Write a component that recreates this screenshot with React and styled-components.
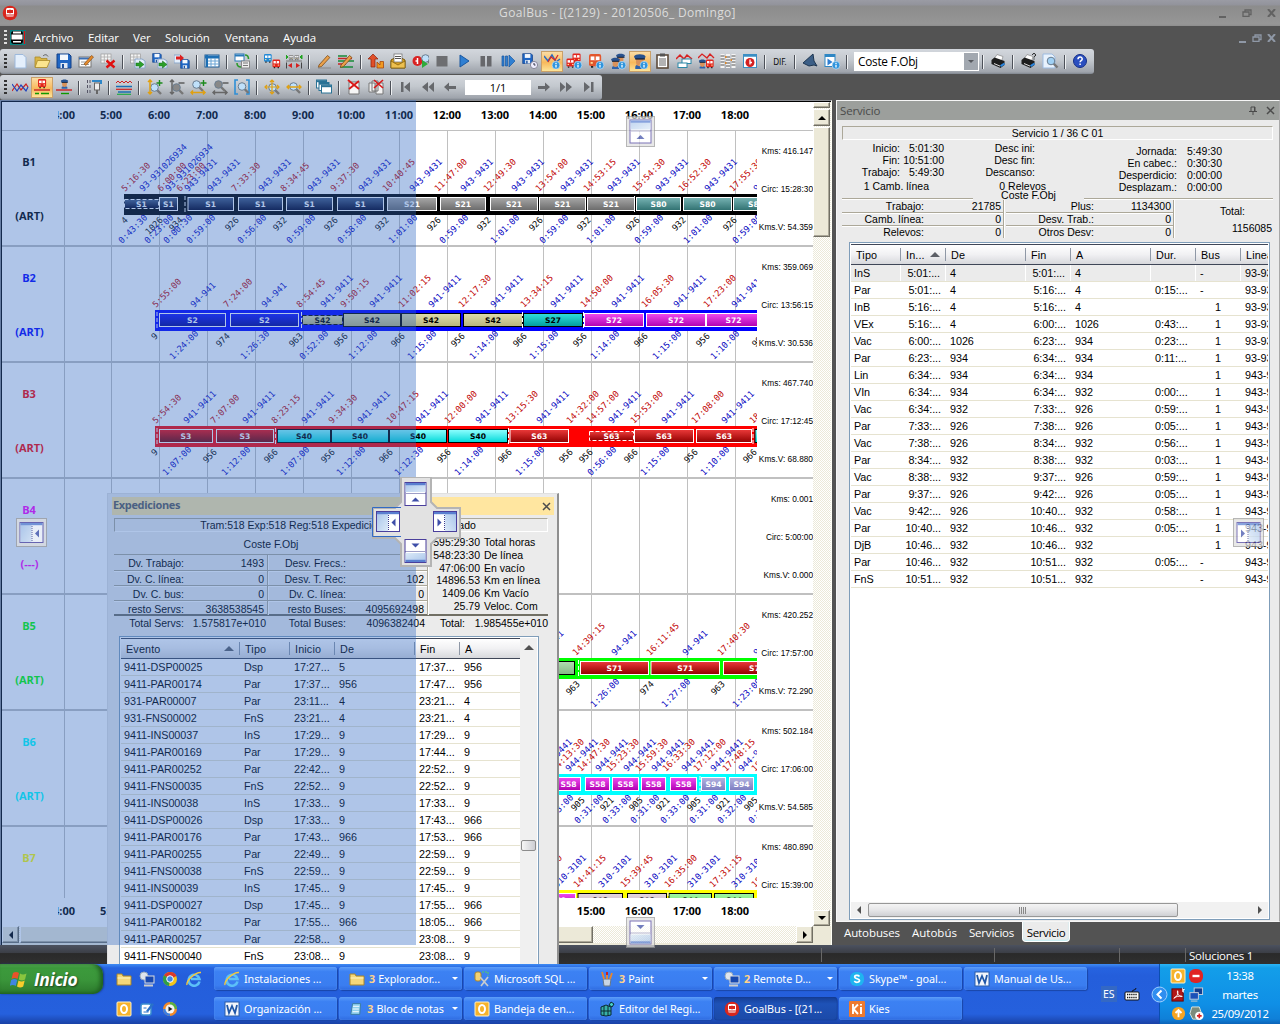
import React from 'react';
import styled, { createGlobalStyle, css } from 'styled-components';

const UI = '"Open Sans", "Noto Sans", sans-serif';
const GRID = '"Liberation Sans", Arial, sans-serif';
const TAHOMA = '"Noto Sans", "DejaVu Sans Condensed", sans-serif';

const Global = createGlobalStyle`
  * { box-sizing: border-box; }
  body { margin: 0; background: #535353; overflow: hidden; }
  #root { width: 1280px; }
`;

const Screen = styled.div`
  position: relative;
  display: flex;
  flex-direction: column;
  width: 1280px;
  height: 1024px;
  overflow: hidden;
  background: #535353;
  font-family: ${GRID};
  font-size: 11px;
  white-space: nowrap;
  cursor: default;
`;

/* ---------- title, menu ---------- */

const TitleBar = styled.header`
  display: flex;
  align-items: center;
  height: 26px;
  flex: none;
  padding: 0 4px 0 2px;
  background: linear-gradient(#9a9ba4 0, #92939b 5px, #8c8c8c 6px, #969696 24px, #8e8e8e 100%);
`;
const TitleText = styled.h1`
  flex: 1;
  margin: 0;
  padding-right: 2px;
  text-align: center;
  font: 400 12px/24px ${UI};
  letter-spacing: 0.35px;
  color: #dcdcdc;
`;
const WinButtons = styled.div`
  display: flex;
  align-items: center;
  gap: ${(p) => p.$gap}px;
  color: ${(p) => p.$color};
`;
const MenuBar = styled.nav`
  display: flex;
  align-items: center;
  height: 23px;
  flex: none;
  padding: 0 4px 0 4px;
`;
const MenuItem = styled.span`
  width: ${(p) => p.$w}px;
  font: 400 11.5px/20px ${UI};
  letter-spacing: -0.1px;
  color: #fff;
`;
const Spacer = styled.div`
  flex: 1;
`;
const Grip = styled.div`
  width: 3px;
  height: 15px;
  margin-right: ${(p) => p.$mr || 0}px;
  background: repeating-linear-gradient(${(p) => p.$c || '#333'} 0 2px, transparent 2px 4px);
`;

/* ---------- toolbars ---------- */

const ToolRow = styled.div`
  display: flex;
  height: 25px;
  flex: none;
  margin-bottom: ${(p) => p.$mb || 0}px;
`;
const ToolStrip = styled.div`
  display: flex;
  align-items: center;
  width: ${(p) => p.$w}px;
  padding-left: 4px;
  border-radius: 3px;
  background: linear-gradient(#d3d7dd, #c3c8ce 45%, #9fa4ac 92%, #7f858f);
`;
const ToolButton = styled.span`
  display: flex;
  align-items: center;
  justify-content: center;
  width: 22px;
  height: 21px;
  flex: none;
  ${(p) =>
    p.$active &&
    css`
      background: linear-gradient(#fbe0ac, #f8b95c 55%, #fde9a0);
      box-shadow: inset 0 0 0 1px #c9a069;
    `}
`;
const ToolSep = styled.span`
  width: 2px;
  height: 14px;
  margin: 0 3px;
  flex: none;
  background: linear-gradient(90deg, #4c5058 50%, #eef0f2 50%);
`;
const Dif = styled.span`
  width: 22px;
  text-align: center;
  font: 8.5px/20px "DejaVu Sans Condensed", sans-serif;
  color: #111;
`;
const Combo = styled.div`
  display: flex;
  width: 125px;
  height: 19px;
  margin: 0 0 0 3px;
  padding: 1px;
  background: #fff;
`;
const ComboText = styled.span`
  flex: 1;
  padding-left: 3px;
  font: 11.8px/17px ${UI};
  letter-spacing: -0.25px;
  color: #000;
`;
const ComboArrow = styled.span`
  display: flex;
  align-items: center;
  justify-content: center;
  width: 14px;
  background: #a2a8b0;
`;
const PageBox = styled.span`
  width: 66px;
  height: 15px;
  margin: 0 2px 0 4px;
  background: #fff;
  text-align: center;
  font: 11px/15px ${UI};
`;

const Mag = ({ x = 0, y = 0, c = '#bfe0fa' }) => (
  <g transform={`translate(${x} ${y})`}>
    <path d="M8 8l4 4" stroke="#777" strokeWidth="2.4" />
    <circle cx="5.5" cy="5.5" r="3.8" fill={c} stroke="#6a7d90" />
  </g>
);
const Info = () => (
  <g>
    <circle cx="12" cy="12.2" r="3.9" fill="#2f94dc" stroke="#d8ecfa" strokeWidth=".6" />
    <path d="M12 9.8v1.2M12 11.8v2.6" stroke="#fff" strokeWidth="1.3" />
  </g>
);
const Bus = ({ x = 0, y = 0, s = 1, c = '#e3251d' }) => (
  <g transform={`translate(${x} ${y}) scale(${s})`}>
    <rect x="0" y="0" width="9" height="9" rx="1.5" fill={c} />
    <rect x="1.2" y="1.8" width="6.6" height="2.8" fill="#fff" />
    <path d="M4.5 1.5v3" stroke={c} />
    <rect x="1.2" y="6" width="1.6" height="1.2" fill="#ffe9a0" />
    <rect x="6.2" y="6" width="1.6" height="1.2" fill="#ffe9a0" />
    <path d="M1.5 9.5h1.6M6 9.5h1.6" stroke="#222" strokeWidth="1.4" />
  </g>
);
const Cop = ({ x = 0, y = 0 }) => (
  <g transform={`translate(${x} ${y})`}>
    <path d="M2 10.500c0-2.500 7-2.500 7 0v1.500H2z" fill="#2d62ab" />
    <path d="M2.600 4h5.800v3a2.900 2.900 0 0 1-5.800 0z" fill="#d9925a" />
    <path d="M1 2.500C2 0 9 0 10 2.500L9 4.300H2z" fill="#28528f" />
    <path d="M2 4.300h7.500" stroke="#0c1a30" strokeWidth=".9" />
  </g>
);
const Disk = ({ s = 1, x = 0, y = 0 }) => (
  <g transform={`translate(${x} ${y}) scale(${s})`}>
    <path d="M1 1h12l2 2v12H1z" fill="#1f66c4" stroke="#123f86" />
    <rect x="4" y="1.5" width="8" height="5.5" fill="#f4f8fd" />
    <rect x="4.5" y="10" width="7" height="5" fill="#dfe8f3" />
    <rect x="6" y="11" width="2" height="4" fill="#1b4f9c" />
  </g>
);
const Sheet = ({ x = 0, y = 0 }) => (
  <g transform={`translate(${x} ${y})`}>
    <rect x="0" y="0" width="10" height="9" fill="#f5f5f5" stroke="#9a9a9a" strokeWidth=".7" />
    <path d="M0 3h10M0 6h10M3.3 0v9M6.6 0v9" stroke="#a9a9a9" strokeWidth=".8" />
  </g>
);
const Pencil = () => <path d="M3 12l8.5-9.5 2.4 2L5.4 13.6l-3 .8z" fill="#eaa04a" stroke="#7a4a17" strokeWidth=".8" />;
const GreenArrow = ({ x = 0, y = 0 }) => (
  <path transform={`translate(${x} ${y})`} d="M0 2h3.5V0L8 3.5 3.5 7V5H0z" fill="#2ba02b" stroke="#136913" strokeWidth=".5" />
);
const Printer = () => (
  <g>
    <path d="M4 6l3-4.5 6 2L11.5 8z" fill="#fff" stroke="#777" strokeWidth=".6" />
    <path d="M1.5 7l3-2.5 10 3.5v4l-4 3-9-4z" fill="#1d1d1d" />
    <path d="M4 10.5l6 2.6" stroke="#ddd" />
    <path d="M10.5 13.2l4-2.6" stroke="#2c86dd" strokeWidth="2" />
  </g>
);

const ICONS = {
  new: <path d="M3 1.5h8l3 3V15H3z" fill="#e4effc" stroke="#9db9dc" />,
  open: (
    <g stroke="#a98a2a" strokeWidth=".8">
      <path d="M1 4h5l1 1.5h6V14H1z" fill="#d9b545" />
      <path d="M3.5 7.5H16L13 14.5H1z" fill="#fbe58e" />
      <path d="M9 3c2-2 4-1.500 5 .5" fill="none" stroke="#444" />
    </g>
  ),
  save: <Disk />,
  edit: (
    <g>
      <rect x="1" y="4" width="12" height="10" fill="#fff" stroke="#777" />
      <path d="M1 5.500h12" stroke="#3c6fb4" strokeWidth="2" />
      <path d="M3 9h8M3 11.500h8" stroke="#999" />
      <path d="M6 11l7.500-8.500 2 1.500L8 12.500z" fill="#e58a2b" stroke="#8a5018" strokeWidth=".7" />
    </g>
  ),
  del: (
    <g>
      <Sheet x={1} y={1} />
      <path d="M6.500 7.500l8 7M14.500 7.500l-8 7" stroke="#e01010" strokeWidth="2.4" />
    </g>
  ),
  expo: (
    <g>
      <Sheet x={0.5} y={1} />
      <path d="M5 6h7l3 2v7H5z" fill="#e4effc" stroke="#8ba6c8" />
      <GreenArrow x={6} y={8} />
    </g>
  ),
  saveexp: (
    <g>
      <Disk s={0.62} />
      <path d="M6 6h6l3 2v7H6z" fill="#e4effc" stroke="#8ba6c8" />
      <GreenArrow x={7} y={8} />
    </g>
  ),
  imp: (
    <g>
      <path d="M0 2h6l2 2v6H0z" fill="#e4effc" stroke="#8ba6c8" />
      <Disk s={0.62} x={6} y={6} />
      <path d="M2 3.500h4V1.500l4 3.500-4 3.500v-2H2z" fill="#dd1f1f" />
    </g>
  ),
  table: (
    <g>
      <rect x="1" y="2" width="14" height="12" fill="#fff" stroke="#1c5b94" />
      <path d="M1 4h14" stroke="#1d6fb4" strokeWidth="3" />
      <path d="M3 2v12" stroke="#1d6fb4" strokeWidth="2" />
      <path d="M7 5v9M11 5v9M4 8h11M4 11h11" stroke="#6aa4d4" />
    </g>
  ),
  refresh: (
    <g>
      <rect x="1" y="1" width="9" height="7" fill="#fff" stroke="#2a79b8" />
      <path d="M1 2.500h9" stroke="#2a79b8" strokeWidth="2" />
      <path d="M11 2c3 0 3.500 2 3.500 4M3 10c0 3 1.500 4 4 4" stroke="#2d9a2d" strokeWidth="1.600" fill="none" />
      <rect x="7.500" y="8" width="8" height="7" fill="#eee" stroke="#888" />
      <path d="M9 10h5M9 12.500h5" stroke="#777" />
    </g>
  ),
  buses: (
    <g>
      <Bus s={0.85} y={1} c="#2289d6" />
      <Bus s={0.85} x={8.500} y={6.500} />
    </g>
  ),
  align: (
    <g>
      <path d="M0 2v4l2-2zM16 2v4l-2-2z" fill="#22a322" stroke="#22a322" />
      <Bus s={0.5} x={2.800} y={2} c="#888" />
      <Bus s={0.5} x={8.500} y={2} c="#888" />
      <path d="M0 8h16" stroke="#777" />
      <path d="M6 10v5l-4-2.500zM10 10v5l4-2.500z" fill="#d42020" />
      <path d="M.5 9.500v6M15.500 9.500v6" stroke="#444" />
    </g>
  ),
  pencil: (
    <g>
      <Pencil />
      <path d="M2 15h13" stroke="#888" />
    </g>
  ),
  pencil2: (
    <g>
      <path d="M0 3h9M0 8h16M2 14h13" stroke="#188a38" strokeWidth="1.300" />
      <path d="M0 5.500h14M0 11h8" stroke="#c72626" strokeWidth="1.300" />
      <Pencil />
    </g>
  ),
  redup: (
    <g>
      <path d="M5 1l5 5H7v8H3V6H0z" fill="#e0502a" stroke="#8c2008" strokeWidth=".7" />
      <path d="M9 15V9l3 3V8.500h3.500V15z" fill="#f09a20" stroke="#a8480c" strokeWidth=".8" />
    </g>
  ),
  mail: (
    <g>
      <path d="M1 7l7-4 7 4v8H1z" fill="#d9a124" stroke="#7d5a0a" />
      <rect x="4" y="1" width="8" height="8" fill="#fff" stroke="#666" strokeWidth=".7" />
      <path d="M5 3.500h6M5 5.500h6" stroke="#555" />
      <path d="M1 8l7 4 7-4v7H1z" fill="#edc050" stroke="#7d5a0a" strokeWidth=".7" />
    </g>
  ),
  stopgo: (
    <g>
      <circle cx="5.500" cy="8" r="5" fill="#d92222" />
      <path d="M5.500 5v6M3.500 8h2" stroke="#fff" strokeWidth="1.500" />
      <Mag x={8} y={0} />
      <path d="M10 7l6 4-6 4z" fill="#2faa3c" />
    </g>
  ),
  stop: <rect x="2.500" y="3" width="11" height="10.500" fill="#6d6e71" />,
  play: <path d="M4 2l9 6-9 6z" fill="#2f7fd2" stroke="#1957a0" />,
  pause: <path d="M2.500 3h4.500v10.500H2.500zM9 3h4.500v10.500H9z" fill="#66676b" />,
  step: (
    <g fill="#2f7fd2" stroke="#1957a0" strokeWidth=".7">
      <path d="M2 3h2v10H2zM5.500 3h2v10h-2zM9 2l6 6-6 6z" />
    </g>
  ),
  saveclk: (
    <g>
      <Disk s={0.7} />
      <circle cx="12" cy="12" r="3.600" fill="#eef" stroke="#889" />
      <path d="M12 10v2h1.500" stroke="#334" fill="none" />
    </g>
  ),
  lineinfo: (
    <g>
      <path d="M0 3l4 5 4-6 4 7 4-3" stroke="#2a6cc0" strokeWidth="1.500" fill="none" />
      <path d="M4 9l3-5 4 3 3-5" stroke="#d82828" strokeWidth="1.200" fill="none" />
      <Info />
    </g>
  ),
  businfo: (
    <g>
      <Bus x={6.500} y={0.5} s={0.9} />
      <Bus x={0.5} y={5.500} s={0.9} />
      <Info />
    </g>
  ),
  bus1: (
    <g>
      <Bus x={1} y={1} s={1.35} c="#e2562c" />
      <Info />
    </g>
  ),
  copinfo: (
    <g>
      <Cop x={5} y={0} />
      <Cop x={0} y={4} />
      <Info />
    </g>
  ),
  cop1: (
    <g>
      <g transform="scale(1.300)">
        <Cop x={0.5} y={0.3} />
      </g>
      <Info />
    </g>
  ),
  clip: (
    <g>
      <rect x="3" y="2" width="11" height="13" fill="#fff" stroke="#5c4a3a" strokeWidth="1.600" />
      <rect x="6" y="0.5" width="5" height="3" fill="#555" />
      <path d="M5 6h7M5 8h7M5 10h7M5 12h7" stroke="#666" />
    </g>
  ),
  wins: (
    <g>
      <path d="M0 6l4-4 4 4 3-4 5 4" stroke="#d82222" strokeWidth="1.500" fill="none" />
      <rect x="6" y="6" width="9" height="4.500" fill="#fff" stroke="#2b88a8" />
      <rect x="2" y="10" width="9" height="4.500" fill="#fff" stroke="#2b88a8" />
    </g>
  ),
  mixed: (
    <g>
      <path d="M0 5l4-4 5 4 3-4 4 4" stroke="#d82222" strokeWidth="1.300" fill="none" />
      <g transform="translate(0 6) scale(.8)">
        <Cop />
      </g>
      <Bus x={8} y={6.500} s={0.85} />
    </g>
  ),
  lists: (
    <g>
      <path d="M2.500 1v14M8 1v14M13.500 1v14" stroke="#f4f4f4" strokeWidth="4" />
      <path d="M.5 3h4M.5 6h4M.5 9h4M.5 12h4M6 4h4M6 7h4M6 10h4M6 13h4M11.500 3h4M11.500 6h4M11.500 9h4M11.500 12h4" stroke="#555" strokeWidth="1.200" />
      <path d="M5 4h1.500M10.500 7h1.500M5 10h1.500" stroke="#e08a2c" strokeWidth="2" />
    </g>
  ),
  stopw: (
    <g>
      <rect x="1.500" y="1.500" width="13" height="13" fill="#fff" stroke="#3b8fc4" />
      <path d="M1.500 2.500h13" stroke="#3b8fc4" strokeWidth="2.500" />
      <circle cx="8" cy="9.500" r="4.500" fill="#d42020" />
      <path d="M8 6.500v5M8 9.500h2" stroke="#fff" strokeWidth="1.300" />
    </g>
  ),
  horn: <path d="M1 10L11 1l1 7 3 5-3-1-5 1z" fill="#3c5f87" stroke="#1d3550" />,
  playinfo: (
    <g>
      <rect x="1" y="1.500" width="10" height="12" fill="#fff" stroke="#2f87c4" />
      <path d="M1 3h10" stroke="#2f87c4" strokeWidth="2" />
      <path d="M3.500 5.500l5 3.500-5 3.500z" fill="#2f7fd2" />
      <Info />
    </g>
  ),
  print: <Printer />,
  printq: (
    <g>
      <Printer />
      <path d="M12.500 2c0-2 3-2 3 0 0 1.500-1.500 1-1.500 2.500M14 5.500v1" stroke="#000" fill="none" />
    </g>
  ),
  preview: (
    <g>
      <path d="M1 1h9l3 3v11H1z" fill="#e8f2fd" stroke="#9dbbe0" />
      <Mag x={3.500} y={2.500} c="#9fd0f4" />
    </g>
  ),
  help: (
    <g>
      <circle cx="8" cy="8" r="6.500" fill="#2b4fc0" stroke="#152f86" />
      <path d="M6 6.300c0-3 4.200-3 4.200-.3 0 1.700-2.100 1.500-2.100 3.200M8.100 10.500v1.600" stroke="#fff" strokeWidth="1.500" fill="none" />
    </g>
  ),
  waves: (
    <g fill="none" strokeWidth="1.200">
      <path d="M0 12l5-7 4 6 5-6 2 3" stroke="#c22" />
      <path d="M0 5l5 7 4-6 5 6 2-4" stroke="#24b" />
    </g>
  ),
  busline: (
    <g>
      <Bus x={4} y={0} s={0.9} />
      <path d="M0 11h16" stroke="#c22" strokeWidth="1.400" />
      <path d="M1 14.500h4M7 14.500h8" stroke="#190" strokeWidth="1.400" />
    </g>
  ),
  copline: (
    <g>
      <g transform="translate(4 0) scale(.82)">
        <Cop />
      </g>
      <path d="M0 11h16" stroke="#c22" strokeWidth="1.400" />
      <path d="M5 14.500h8" stroke="#190" strokeWidth="1.400" />
    </g>
  ),
  door: (
    <g>
      <path d="M1.500 1v14M4 1v14" stroke="#556" strokeDasharray="3 2" />
      <path d="M6 2h9v3" stroke="#2d86c8" strokeWidth="2" fill="none" />
      <rect x="8.500" y="4" width="5" height="7" fill="#eee" stroke="#666" />
      <path d="M11 11v4" stroke="#666" strokeWidth="2" />
    </g>
  ),
  wavelines: (
    <g fill="none">
      <path d="M0 4l2-2 2 2 2-2 2 2 2-2 2 2 2-2 2 2" stroke="#c22" />
      <path d="M0 7.500h16M2 13h13" stroke="#1a6fb4" strokeWidth="1.600" />
      <path d="M0 10.300h16" stroke="#c22" strokeWidth="1.200" />
      <path d="M1 15.300h14" stroke="#2a4" strokeWidth="1.200" />
    </g>
  ),
  zin: (
    <g>
      <Mag x={3} y={3} />
      <path d="M4 1v14M2 3l2-2 2 2M2 13l2 2 2-2" stroke="#e0a010" strokeWidth="1.500" fill="none" />
      <path d="M13.500 1v6M10.500 4h6" stroke="#1c8a1c" strokeWidth="1.400" />
    </g>
  ),
  zout: (
    <g>
      <Mag x={3} y={3} c="#888" />
      <path d="M4 1v14M2 3l2-2 2 2M2 13l2 2 2-2" stroke="#666" strokeWidth="1.500" fill="none" />
      <path d="M10.500 4h6" stroke="#555" strokeWidth="1.400" />
    </g>
  ),
  hin: (
    <g>
      <Mag x={1} y={0} />
      <path d="M1 13.500h14M3 11.500l-2 2 2 2M13 11.500l2 2-2 2" stroke="#e0a010" strokeWidth="1.500" fill="none" />
      <path d="M13.500 1v6M10.500 4h6" stroke="#1c8a1c" strokeWidth="1.400" />
    </g>
  ),
  hout: (
    <g>
      <Mag x={1} y={0} c="#888" />
      <path d="M1 13.500h14M3 11.500l-2 2 2 2M13 11.500l2 2-2 2" stroke="#666" strokeWidth="1.500" fill="none" />
      <path d="M10.500 4h6" stroke="#555" strokeWidth="1.400" />
    </g>
  ),
  zbox: (
    <g>
      <path d="M4 1H1v14h3M12 1h3v14h-3" stroke="#2f8fd6" strokeWidth="1.600" fill="none" />
      <Mag x={2.500} y={2} />
    </g>
  ),
  cross: (
    <g>
      <Mag x={3} y={3} />
      <path d="M8 1v14M1 8h14M6 3l2-2 2 2M6 13l2 2 2-2M3 6L1 8l2 2M13 6l2 2-2 2" stroke="#e0a010" strokeWidth="1.200" fill="none" />
    </g>
  ),
  hfit: (
    <g>
      <Mag x={2} y={2} />
      <path d="M1 8h14M3 6L1 8l2 2M13 6l2 2-2 2" stroke="#e0a010" strokeWidth="1.300" fill="none" />
    </g>
  ),
  cascade: (
    <g fill="#fff" stroke="#2a7396">
      {[0, 2.5, 5].map((d) => (
        <g key={d}>
          <rect x={0.5 + d} y={1 + d} width="10" height="8" />
          <path d={`M${0.5 + d} ${2.2 + d}h10`} strokeWidth="2" />
        </g>
      ))}
    </g>
  ),
  delsheet: (
    <g>
      <path d="M3 3h10v12H3z" fill="#f6f6f6" stroke="#777" />
      <path d="M2 1l11 9M13 2L3 10" stroke="#d81818" strokeWidth="1.900" />
    </g>
  ),
  delsheets: (
    <g>
      <path d="M1 4h6v9H1zM4 2h6v10H4zM8 4h7v11H8z" fill="#f2f2f2" stroke="#777" />
      <path d="M6 1l9 8M15 1L6 9" stroke="#d81818" strokeWidth="1.600" />
    </g>
  ),
  first: <path d="M3 3h2.500v10H3zM12 3v10L6 8z" fill="#66686c" />,
  prev2: <path d="M8 3v10L2 8zM14 3v10L8.500 8z" fill="#66686c" />,
  prev: <path d="M2 8l5-4.500V7h7v3H7v2.500z" fill="#66686c" />,
  next: <path d="M14 8L9 3.500V7H2v3h7v2.500z" fill="#66686c" />,
  next2: <path d="M2 3v10l5.500-5zM8 3v10l6-5z" fill="#66686c" />,
  last: <path d="M4 3v10l6-5zM11 3h2.500v10H11z" fill="#66686c" />,
};

const Tool = ({ n, active }) => (
  <ToolButton $active={active}>
    <svg width="17" height="17" viewBox="0 0 17 17" fill="none">
      {ICONS[n]}
    </svg>
  </ToolButton>
);
const tools = (list) =>
  list.split(' ').map((n, i) => (n === '|' ? <ToolSep key={i} /> : <Tool key={i} n={n.replace('*', '')} active={n.includes('*')} />));

/* ---------- planning chart ---------- */

const Workspace = styled.main`
  display: flex;
  height: 845px;
  flex: none;
  gap: 4px;
`;
const ChartFrame = styled.section`
  display: grid;
  grid-template-columns: 811px 18px;
  grid-template-rows: 824px 17px;
  width: 832px;
  height: 845px;
  border: 1px solid #8b8d92;
  border-bottom: 0;
  border-right-color: #fffff5;
  box-shadow: inset 1px 1px 0 #000;
  padding: 1px 0 0 1px;
  background: #ece9d8;
`;
const Canvas = styled.svg`
  display: block;
  background: #fff;
`;
const checker = css`
  background: repeating-conic-gradient(#ece9d8 0 25%, #fff 0 50%) 0 0 / 2px 2px;
`;
const VTrack = styled.div`
  display: flex;
  flex-direction: column;
  ${checker}
`;
const HTrack = styled.div`
  display: flex;
  ${checker}
`;
const Classic = styled.div`
  display: flex;
  align-items: center;
  justify-content: center;
  width: ${(p) => p.$w}px;
  height: ${(p) => p.$h}px;
  flex: none;
  margin-top: ${(p) => p.$mt || 0}px;
  margin-left: ${(p) => p.$ml || 0}px;
  background: #ece9d8;
  border: 1px solid;
  border-color: #fff #716f64 #716f64 #fff;
  box-shadow: inset -1px -1px 0 #aca899;
`;
const Arrow = styled.i`
  border: ${(p) => p.$s || 4}px solid transparent;
  ${(p) => p.$d === 'up' && `border-bottom-color:${p.$c || '#000'}; border-top:0;`}
  ${(p) => p.$d === 'down' && `border-top-color:${p.$c || '#000'}; border-bottom:0;`}
  ${(p) => p.$d === 'left' && `border-right-color:${p.$c || '#000'}; border-left:0;`}
  ${(p) => p.$d === 'right' && `border-left-color:${p.$c || '#000'}; border-right:0;`}
`;

const PAL = {
  navy: ['#4a5f84', '#000020', '#fff', '#fff'],
  grey: ['#a8a8a8', '#6a6a6a', '#fff', '#fff'],
  teal: ['#78b4b4', '#2f7070', '#fff', '#fff'],
  blue: ['#1212ff', '#000090', '#fff', '#fff'],
  khaki: ['#dedcae', '#b6b37c', '#000', '#000'],
  turq: ['#30e0e0', '#009c9c', '#000', '#000'],
  magenta: ['#f04cf0', '#b000b0', '#fff', '#fff'],
  red: ['#ec3a3a', '#900000', '#fff', '#fff'],
  maroon: ['#f80808', '#700000', '#fff', '#fff'],
  cyan: ['#90ffff', '#00d8d8', '#000', '#000'],
  sage: ['#b0dcb0', '#84b884', '#000', '#000'],
  lav: ['#b4b4e0', '#7c7cc0', '#fff', '#fff'],
  rose: ['#e6d6de', '#c8b8c0', '#000', '#000'],
  lime: ['#a0f8a0', '#70e070', '#000', '#000'],
};

const ROWS = [
  {
    id: 'B1', kind: '(ART)', color: '#000', lab: '#000', from: 124,
    kms: '416.147', circ: '15:28:30', kv: '54.359',
    times: '5:16:30@120 6:00:00@156 6:23:00@175 7:33:30@230 8:34:45@279 9:37:30@329 10:40:45@381 11:47:00@433 12:49:30@482 13:54:00@534 14:53:15@582 15:54:30@631 16:52:30@677 17:55:30@728',
    routes: '93-931026934@138 93-931026934@164 943-9431@183 943-9431@206 943-9431@257 943-9431@306 943-9431@357 943-9431@408 943-9431@459 943-9431@510 943-9431@559 943-9431@606 943-9431@654 943-9431@703 943-9431@752',
    nodes: '4@128 1026@163 934@183 926@239 932@287 926@338 932@389 926@441 932@491 926@543 932@591 926@640 932@686 926@737',
    durs: '0:43:30@117 0:23:00@143 0:00:30@162 0:59:00@185 0:56:00@236 0:59:00@285 0:58:00@336 1:01:00@387 0:59:00@438 1:01:00@489 0:59:00@538 1:01:00@585 0:59:00@633 1:01:00@682 0:59:00@731',
    ticks: [185, 634.5],
    blocks: [[124, 159, 'S1', 'navy', 1], [159, 178, 'S1', 'navy'], [187.5, 234, 'S1', 'navy'], [238, 283, 'S1', 'navy'], [286, 333, 'S1', 'navy'], [337, 384, 'S1', 'navy'], [387, 437, 'S21', 'grey'], [440, 486, 'S21', 'grey'], [490, 538, 'S21', 'grey'], [539, 586, 'S21', 'grey'], [587, 635, 'S21', 'grey'], [636, 681, 'S80', 'teal'], [683, 732, 'S80', 'teal'], [733, 779, 'S80', 'teal']],
  },
  {
    id: 'B2', kind: '(ART)', color: '#0000ff', lab: '#0000ff', from: 155,
    kms: '359.069', circ: '13:56:15', kv: '30.536',
    times: '5:55:00@151 7:24:00@222 8:54:45@295 9:50:15@339 11:02:15@397 12:17:30@457 13:34:15@519 14:50:00@579 16:05:30@640 17:23:00@702',
    routes: '94-941@189 94-941@260 941-9411@319 941-9411@368 941-9411@427 941-9411@489 941-9411@549 941-9411@610 941-9411@672 941-9411@730',
    nodes: '9@158 974@230 963@303 956@348 966@405 956@465 966@527 956@587 966@648 956@710 966@766',
    durs: '1:24:00@168 1:26:30@239 0:52:00@298 1:12:00@347 1:15:00@406 1:14:00@468 1:15:00@528 1:14:00@589 1:15:00@651 1:10:00@709',
    ticks: [157, 301.5, 522.5, 583.5],
    blocks: [[159, 226, 'S2', 'blue'], [230, 299, 'S2', 'blue'], [302, 343, 'S42', 'khaki', 1], [343, 401, 'S42', 'khaki'], [401, 461, 'S42', 'khaki'], [463, 523, 'S42', 'khaki'], [523, 583, 'S27', 'turq'], [584, 644, 'S72', 'magenta'], [646, 706, 'S72', 'magenta'], [706, 761, 'S72', 'magenta']],
  },
  {
    id: 'B3', kind: '(ART)', color: '#ff0000', lab: '#ff0000', from: 155,
    kms: '467.740', circ: '17:12:45', kv: '68.880',
    times: '5:54:30@151 7:07:00@209 8:23:15@270 9:34:30@327 10:47:15@385 12:00:00@443 13:15:30@504 14:32:00@565 14:57:00@585 15:53:00@629 17:08:00@690 18:19:00@748',
    routes: '941-9411@182 941-9411@241 941-9411@300 941-9411@356 941-9411@414 941-9411@474 941-9411@535 941-9411@607 941-9411@660 941-9411@720',
    nodes: '9@158 956@217 966@278 956@335 966@393 956@451 966@512 956@573 956@593 966@638 956@698 966@757',
    durs: '1:07:00@161 1:12:00@220 1:07:00@279 1:12:00@335 1:12:30@393 1:14:00@453 1:15:00@514 0:56:00@586 1:15:00@639 1:10:00@699',
    ticks: [157, 275.5, 508.5, 753],
    blocks: [[159, 213, 'S3', 'maroon'], [216, 274, 'S3', 'maroon'], [277, 331, 'S40', 'cyan'], [331, 389, 'S40', 'cyan'], [389, 447, 'S40', 'cyan'], [448, 508, 'S40', 'cyan'], [509.5, 569, 'S63', 'red'], [589, 634, 'S63', 'red', 1], [634, 694, 'S63', 'red'], [696, 752, 'S63', 'red'], [754.5, 800, '', 'cyan']],
  },
  { id: 'B4', kind: '(---)', lab: '#ff00ff', kms: '0.001', circ: '5:00:00', kv: '0.000' },
  {
    id: 'B5', kind: '(ART)', color: '#00ff00', lab: '#00ff00', from: 440,
    kms: '420.252', circ: '17:57:00', kv: '72.290',
    times: '14:39:15@571 16:11:45@645 17:40:30@716',
    routes: '94-941@537 94-941@610 94-941@681 94-941@752',
    nodes: '963@580 974@654 963@725',
    durs: '1:26:00@589 1:27:00@660 1:23:00@731',
    ticks: [578.5],
    blocks: [[510, 575, '', 'sage'], [580, 649, 'S71', 'red'], [650.5, 720, 'S71', 'red'], [723, 791, 'S71', 'red']],
  },
  {
    id: 'B6', kind: '(ART)', color: '#00ffff', lab: '#00ffff', from: 440,
    kms: '502.184', circ: '17:06:00', kv: '54.585',
    times: '14:13:30@550 14:47:30@576 15:23:30@605 15:59:30@634 16:33:30@661 17:12:00@692 17:48:15@721 18:20:00@750',
    routes: '944-9441@538 944-9441@564 944-9441@594 944-9441@622 944-9441@650 944-9441@680 944-9441@709 944-9441@737',
    nodes: '905@585 921@614 905@643 921@670 905@701 921@730 905@758',
    durs: '0:33:00@543 0:31:00@573 0:33:00@601 0:31:00@629 0:33:00@659 0:31:00@688 0:32:00@716 0:31:00@747',
    ticks: [700],
    blocks: [[556, 581, 'S58', 'magenta'], [585, 610, 'S58', 'magenta'], [612, 639, 'S58', 'magenta'], [641, 666, 'S58', 'magenta'], [670, 697, 'S58', 'magenta'], [701, 726, 'S94', 'lav'], [729, 754, 'S94', 'lav']],
  },
  {
    id: 'B7', kind: '', color: '#ffff00', lab: '#ffff00', from: 440,
    kms: '480.890', circ: '15:39:00', kv: '',
    times: '13:45:00@528 14:41:15@572 15:39:45@619 16:35:00@663 17:31:15@708 18:25:00@750',
    routes: '310-3101@552 310-3101@597 310-3101@643 310-3101@686 310-3101@730',
    nodes: '', durs: '', ticks: [668],
    blocks: [[540, 576, 'S78', 'magenta'], [577.5, 623, 'S93', 'rose'], [627, 667, 'S93', 'rose'], [668.5, 712, 'S44', 'lime'], [714, 754, 'S44', 'lime']],
  },
];

const Slant = styled.text`
  font: 8.7px "DejaVu Sans Mono", monospace;
  fill: ${(p) => p.$c};
`;
const Axis = styled.text`
  font: 700 11px "Open Sans", "Noto Sans", sans-serif;
  text-anchor: middle;
  fill: ${(p) => p.$c || '#000'};
`;
const Stat = styled.text`
  font: 8.3px ${GRID};
  text-anchor: end;
`;
const BlockText = styled.text`
  font: 700 7.6px "DejaVu Sans", sans-serif;
  text-anchor: middle;
`;

const slants = (list, color, y, dx, end) =>
  (list || '')
    .split(' ')
    .filter(Boolean)
    .map((e) => {
      const [t, x] = e.split('@');
      const px = Number(x) + dx;
      return (
        <Slant key={e} $c={color} transform={`translate(${px} ${y}) rotate(-45)`} textAnchor={end ? 'end' : 'start'}>
          {t}
        </Slant>
      );
    });

const HOURS = Array.from({ length: 15 }, (_, i) => [`${i + 4}:00`, i === 0 ? 64.5 : 63.5 + i * 48]);

const Chart = () => (
  <Canvas width="811" height="824" viewBox="2 102 811 824">
    <defs>
      {Object.entries(PAL).map(([k, [a, b]]) => (
        <linearGradient key={k} id={k} x1="0" y1="0" x2="0" y2="1">
          <stop offset="0" stopColor={a} />
          <stop offset="1" stopColor={b} />
        </linearGradient>
      ))}
      <clipPath id="plot">
        <rect x="58" y="102" width="699" height="796" />
      </clipPath>
      <clipPath id="axis">
        <rect x="58" y="102" width="755" height="824" />
      </clipPath>
    </defs>
    {HOURS.map(([t, x]) => (
      <path key={t} d={`M${x} 131V898`} stroke="#c0c0c0" />
    ))}
    <path d="M2 130.500H813" stroke="#c0c0c0" />
    {[246, 362, 478, 594, 710, 826].map((y) => (
      <path key={y} d={`M2 ${y}H813`} stroke="#c0c0c0" strokeWidth="2" />
    ))}
    <g clipPath="url(#axis)">
      {HOURS.map(([t, x]) => (
        <React.Fragment key={t}>
          <Axis x={x - 0.5} y="119">{t}</Axis>
          <Axis x={x - 0.5} y="915">{t}</Axis>
        </React.Fragment>
      ))}
    </g>
    {ROWS.map((r, i) => {
      const y = 116 * i;
      return (
        <g key={r.id}>
          <Axis x="29" y={166 + y} $c={r.lab}>{r.id}</Axis>
          <Axis x="29.500" y={220 + y} $c={r.lab}>{r.kind}</Axis>
          <Stat x="813" y={154 + y}>Kms: {r.kms}</Stat>
          <Stat x="813" y={192 + y}>Circ: {r.circ}</Stat>
          {r.kv && <Stat x="813" y={230 + y}>Kms.V: {r.kv}</Stat>}
          {r.blocks && (
            <g clipPath="url(#plot)">
              {slants(r.times, '#c00000', 192 + y, 5)}
              {slants(r.routes, '#0000c0', 192 + y, 5)}
              {slants(r.nodes, '#000', 220.5 + y, 0.5, true)}
              {slants(r.durs, '#0000c0', 244 + y, 5)}
              <rect x={r.from} y={194 + y} width={757 - r.from} height="21" fill={r.color} />
              {r.blocks.map(([a, b, t, p, dashed]) => (
                <g key={a}>
                  <rect
                    x={a + 0.5} y={(dashed ? 199.5 : 197.5) + y} width={b - a - 1} height={dashed ? 9 : 13}
                    fill={`url(#${p})`} stroke={PAL[p][3]} strokeDasharray={dashed ? '4 2' : undefined}
                  />
                  <BlockText x={(a + b) / 2} y={206.6 + y} fill={PAL[p][2]}>{t}</BlockText>
                </g>
              ))}
              {r.ticks.map((x) => (
                <path key={x} d={`M${x} ${196 + y}v17`} stroke="#fff" strokeDasharray="4 2" />
              ))}
            </g>
          )}
        </g>
      );
    })}
  </Canvas>
);

/* ---------- side panel ---------- */

const Side = styled.aside`
  display: flex;
  flex-direction: column;
  width: 444px;
`;
const SideBody = styled.div`
  display: flex;
  flex-direction: column;
  height: 822px;
  padding: 0 6px 1px 5px;
  background: #ebebeb;
  border: 1px solid #f6f6f6;
  border-right-color: #a8a8a8;
`;
const SideTitle = styled.div`
  display: flex;
  align-items: center;
  justify-content: space-between;
  height: 19px;
  margin: 0 -6px 6px -5px;
  padding: 0 4px 0 3px;
  background: #9c9f9c;
  font: 11.5px/18px ${UI};
  letter-spacing: -0.15px;
  color: #4a4a4a;
`;
const Sunken = styled.div`
  height: 14px;
  flex: none;
  border: 1px solid;
  border-color: #aca899 #fff #fff #aca899;
  text-align: center;
  line-height: 13px;
  font-size: 10.5px;
  padding-left: ${(p) => p.$pl || 0}px;
`;
const InfoCols = styled.div`
  display: grid;
  grid-template-columns: 102px 102px 142px 1fr;
  height: 54px;
  flex: none;
  padding-top: 2px;
  font-size: 10.5px;
  line-height: 12px;
`;
const Pairs = styled.dl`
  display: grid;
  grid-template-columns: ${(p) => p.$c};
  grid-auto-rows: 12px;
  align-content: start;
  justify-items: end;
  margin: ${(p) => p.$mt || 0}px 0 0;
`;
const Cell = styled.div`
  text-align: right;
  margin-top: ${(p) => p.$mt || 0}px;
  padding-right: ${(p) => p.$pr || 0}px;
  grid-column: ${(p) => p.$span || 'auto'};
`;
const Legend = styled.div`
  display: flex;
  align-items: center;
  height: 10px;
  margin-top: -4px;
  flex: none;
  font-size: 10.5px;
  line-height: 10px;
`;
const Rule = styled.span`
  width: ${(p) => p.$w}px;
  height: 2px;
  margin-top: 7px;
  border-top: 1px solid #aca899;
  background: #fff;
`;
const LegendText = styled.span`
  flex: 1;
  text-align: center;
`;
const CostGrid = styled.div`
  display: grid;
  grid-template-columns: 164px 170px 1fr;
  height: 38px;
  flex: none;
  margin-bottom: 4px;
  font-size: 10.5px;
`;
const CostCol = styled.div`
  display: flex;
  flex-direction: column;
  border-right: 1px solid #aca899;
  box-shadow: 1px 0 0 #fff;
  margin-right: 2px;
`;
const CostRow = styled.div`
  display: grid;
  grid-template-columns: ${(p) => p.$l}px 1fr;
  height: 12px;
  line-height: 13px;
  text-align: right;
  padding-right: 2px;
  overflow: hidden;
  & + & { height: 13px; line-height: 12px; border-top: 1px solid #aca899; box-shadow: inset 0 1px 0 #fff; }
`;
const TotalBox = styled.div`
  display: flex;
  flex-direction: column;
  text-align: right;
  line-height: 17px;
  padding: 3px 1px 0 0;
`;
const TotalLabel = styled.span`
  padding-right: 27px;
`;

const ListBox = styled.div`
  display: flex;
  flex: 1;
  min-height: 0;
  margin: ${(p) => p.$m};
  padding: 1px;
  flex-direction: ${(p) => p.$dir};
  border: 1px solid #7f9db9;
  background: #fff;
`;
const Rows = styled.div`
  flex: 1;
  min-height: 0;
  min-width: 0;
  overflow: hidden;
  font-size: 10.8px;
  letter-spacing: -0.05px;
`;
const HeadRow = styled.div`
  display: grid;
  grid-template-columns: ${(p) => p.$c};
  height: 21px;
  border-top: 1px solid #3f4657;
  border-bottom: 1px solid #3f4657;
  background: linear-gradient(#fff, #f1f1f3 50%, #d7d8dc);
`;
const HeadCell = styled.div`
  display: flex;
  align-items: center;
  justify-content: space-between;
  height: 13px;
  margin-top: 3px;
  padding: 0 5px;
  border-right: 1px solid #8f98a6;
  overflow: hidden;
  letter-spacing: 0.15px;
  &:last-child { border-right: 0; padding-right: 0; }
`;
const DataRow = styled.div`
  display: grid;
  grid-template-columns: ${(p) => p.$c};
  height: 17px;
  line-height: 16px;
  border-bottom: 1px solid #e6e3d0;
  background: ${(p) => (p.$sel ? '#ebebeb' : '#fff')};
`;
const DataCell = styled.div`
  overflow: hidden;
  padding-left: ${(p) => (p.$i ? 4 : 3)}px;
  padding-right: 5px;
  text-align: ${(p) => p.$a || 'left'};
  ${(p) => p.$sel && 'border-right: 1px solid #fff;'}
  &:last-child { padding-right: 0; border-right: 0; }
`;

const SCOLS = '50px 45px 80px 45px 80px 45px 45px 1fr';
const SDATA = `InS|5:01:...|4|5:01:...|4||-|93-93
Par|5:01:...|4|5:16:...|4|0:15:...|-|93-93
InB|5:16:...|4|5:16:...|4||1|93-93
VEx|5:16:...|4|6:00:...|1026|0:43:...|1|93-93
Vac|6:00:...|1026|6:23:...|934|0:23:...|1|93-93
Par|6:23:...|934|6:34:...|934|0:11:...|1|93-93
Lin|6:34:...|934|6:34:...|934||1|943-9
VIn|6:34:...|934|6:34:...|932|0:00:...|1|943-9
Vac|6:34:...|932|7:33:...|926|0:59:...|1|943-9
Par|7:33:...|926|7:38:...|926|0:05:...|1|943-9
Vac|7:38:...|926|8:34:...|932|0:56:...|1|943-9
Par|8:34:...|932|8:38:...|932|0:03:...|1|943-9
Vac|8:38:...|932|9:37:...|926|0:59:...|1|943-9
Par|9:37:...|926|9:42:...|926|0:05:...|1|943-9
Vac|9:42:...|926|10:40...|932|0:58:...|1|943-9
Par|10:40...|932|10:46...|932|0:05:...|1|943-9
DjB|10:46...|932|10:46...|932||1|943-9
Par|10:46...|932|10:51...|932|0:05:...|-|943-9
FnS|10:51...|932|10:51...|932||-|943-9`.split('\n').map((l) => l.split('|'));

const ECOLS = '119px 50px 45px 80px 45px 1fr';
const EDATA = `9411-DSP00025|Dsp|17:27...|5|17:37...|956
9411-PAR00174|Par|17:37...|956|17:47...|956
931-PAR00007|Par|23:11...|4|23:21...|4
931-FNS00002|FnS|23:21...|4|23:21...|4
9411-INS00037|InS|17:29...|9|17:29...|9
9411-PAR00169|Par|17:29...|9|17:44...|9
9411-PAR00252|Par|22:42...|9|22:52...|9
9411-FNS00035|FnS|22:52...|9|22:52...|9
9411-INS00038|InS|17:33...|9|17:33...|9
9411-DSP00026|Dsp|17:33...|9|17:43...|966
9411-PAR00176|Par|17:43...|966|17:53...|966
9411-PAR00255|Par|22:49...|9|22:59...|9
9411-FNS00038|FnS|22:59...|9|22:59...|9
9411-INS00039|InS|17:45...|9|17:45...|9
9411-DSP00027|Dsp|17:45...|9|17:55...|966
9411-PAR00182|Par|17:55...|966|18:05...|966
9411-PAR00257|Par|22:58...|9|23:08...|9
9411-FNS00040|FnS|23:08...|9|23:08...|9`.split('\n').map((l) => l.split('|'));

const HBar = styled.div`
  display: flex;
  align-items: center;
  justify-content: space-between;
  height: 16px;
  padding: 0 6px;
  background: #f1f1f1;
`;
const HThumb = styled.div`
  display: flex;
  justify-content: center;
  align-items: center;
  width: 310px;
  height: 14px;
  margin-left: 7px;
  border: 1px solid #979797;
  border-radius: 2px;
  background: linear-gradient(#f4f4f4, #e6e6e8 50%, #cfd0d4);
`;
const Ridges = styled.span`
  width: 8px;
  height: 7px;
  background: repeating-linear-gradient(90deg, #888 0 1px, transparent 1px 2px);
`;
const Tabs = styled.div`
  display: flex;
  height: 21px;
  padding-left: 8px;
  font: 11.5px/21px ${UI};
  color: #fff;
`;
const Tab = styled.span`
  width: ${(p) => p.$w}px;
  letter-spacing: ${(p) => p.$ls || 0}px;
`;
const ActiveTab = styled.span`
  width: 48px;
  height: 20px;
  text-align: center;
  letter-spacing: -0.35px;
  color: #000;
  background: #ebebeb;
  border: 1px solid #fff;
  border-top: 0;
  border-radius: 0 0 4px 4px;
  box-shadow: inset 0 -1px 2px #bdeef5;
`;

/* ---------- floating window ---------- */

const Floating = styled.section`
  position: absolute;
  left: 107px;
  top: 493px;
  display: flex;
  flex-direction: column;
  width: 452px;
  height: 490px;
  padding: 3px 3px 0 4px;
  background: #ebebeb;
  border: 1px solid #e0e0e0;
  border-right: 2px solid #8f8f8f;
`;
const FloatTitle = styled.div`
  display: flex;
  justify-content: space-between;
  align-items: center;
  height: 18px;
  flex: none;
  padding: 0 3px 0 1px;
  background: #ffe6a0;
  font: 700 11px/16px ${UI};
  letter-spacing: -0.35px;
  color: #5a5a5a;
`;
const FloatName = styled.span`
  margin-top: -2px;
`;
const FloatBody = styled.div`
  display: flex;
  flex-direction: column;
  flex: 1;
  min-height: 0;
  padding: 3px 6px 0 2px;
`;
const Summary = styled.div`
  display: grid;
  grid-template-columns: 314px 1fr;
  height: 84px;
  flex: none;
  border-bottom: 2px solid #716f64;
  font-size: 10.5px;
`;
const SummaryTitle = styled.div`
  height: 22px;
  line-height: 25px;
  text-align: center;
`;
const Halves = styled.div`
  display: grid;
  grid-template-columns: 154px 160px;
`;
const Half = styled.div`
  border-top: 1px solid #aca899;
  border-right: 1px solid #aca899;
  box-shadow: 1px 0 0 #fff;
`;
const HalfRow = styled.div`
  display: grid;
  grid-template-columns: ${(p) => p.$l}px 1fr;
  height: 15px;
  padding-right: 3px;
  line-height: 17px;
  text-align: right;
  & + & { border-top: 1px solid #aca899; box-shadow: inset 0 1px 0 #fff; line-height: 16px; }
`;
const Facts = styled.div`
  display: grid;
  grid-template-columns: 52px 1fr;
  grid-auto-rows: 12.8px;
  column-gap: 4px;
  padding-top: 4px;
  line-height: 13px;
`;
const Totals = styled.div`
  display: grid;
  grid-template-columns: 70px 82px 80px 79px 40px 83px;
  height: 20px;
  flex: none;
  text-align: right;
  font-size: 10.5px;
  line-height: 15px;
`;
const VBar = styled.div`
  display: flex;
  flex-direction: column;
  align-items: center;
  width: 17px;
  padding-top: 7px;
  background: #f0f0f0;
`;
const VThumb = styled.div`
  width: 15px;
  height: 11px;
  margin-top: 190px;
  border: 1px solid #8c8c8c;
  border-radius: 2px;
  background: linear-gradient(90deg, #f6f6f6, #cdced3);
`;

/* ---------- overlays ---------- */

const DropShade = styled.div`
  position: absolute;
  left: 0;
  top: 100px;
  width: 416px;
  height: 845px;
  background: rgba(49, 106, 197, 0.39);
`;
const Guide = styled.svg`
  position: absolute;
  left: ${(p) => p.$x}px;
  top: ${(p) => p.$y}px;
  opacity: ${(p) => p.$o || 1};
`;
const Dock = ({ rot = 0 }) => (
  <g transform={`rotate(${rot} 11 12)`}>
    <rect x="0.5" y="0.5" width="21" height="23" fill="#fff" stroke="#4a3f9c" />
    <rect x="1" y="1" width="20" height="9" fill="url(#dockFill)" />
    <rect x="1" y="1" width="20" height="2.200" fill="#5a7fd0" />
    <path d="M2 11.500h19" stroke="#3c3c8c" strokeDasharray="1 1" />
    <path d="M7 19.500l4-4 4 4z" fill="#3e4ea8" />
  </g>
);
const SideDock = ({ flip }) => (
  <g transform={flip ? 'translate(24 0) scale(-1 1)' : undefined}>
    <rect x="0.5" y="0.5" width="23" height="20" fill="#fff" stroke="#4a3f9c" />
    <rect x="1" y="1" width="11" height="19" fill="url(#dockFill)" />
    <rect x="1" y="1" width="22" height="2.200" fill="#5a7fd0" />
    <path d="M12.500 4v16" stroke="#3c3c8c" strokeDasharray="1 1" />
    <path d="M19.500 7.500v8l-4-4z" fill="#3e4ea8" />
  </g>
);
const DockDefs = () => (
  <defs>
    <linearGradient id="dockFill" x1="0" y1="0" x2="1" y2="1">
      <stop offset="0" stopColor="#a8c4ea" />
      <stop offset="1" stopColor="#dceaf8" />
    </linearGradient>
  </defs>
);
const EdgeGuide = ({ x, y, rot, side, flip }) => (
  <Guide $x={x} $y={y} $o={0.72} width="31" height="31" viewBox="0 0 31 31">
    <DockDefs />
    {side ? (
      <>
        <rect x="0.5" y="0.5" width="30" height="28" fill="#e0e0e0" stroke="#9a9a9a" />
        <g transform="translate(3.500 4)"><SideDock flip={flip} /></g>
      </>
    ) : (
      <>
        <rect x="0.5" y="0.5" width="28" height="30" fill="#e0e0e0" stroke="#9a9a9a" />
        <g transform="translate(3.500 3.500)"><Dock rot={rot} /></g>
      </>
    )}
  </Guide>
);

/* ---------- status bar, task bar ---------- */

const Status = styled.footer`
  display: flex;
  justify-content: flex-end;
  height: 19px;
  flex: none;
  background: linear-gradient(#4b515f 0, #3c3f47 40%, #2a2a2a 45%, #303030 100%);
  font: 11.500px/21px ${UI};
  letter-spacing: -0.25px;
  color: #fff;
`;
const StatusPane = styled.span`
  width: ${(p) => p.$w}px;
  height: 14px;
  margin-top: 3px;
  padding-left: 3px;
  line-height: 16px;
  border-left: 1px solid #686868;
`;
const TaskBar = styled.footer`
  position: relative;
  display: flex;
  height: 60px;
  flex: none;
  background: linear-gradient(#3f8cf3 0, #2663e0 4px, #245edb 12px, #2560dd 50px, #1941a5 60px);
`;
const Start = styled.div`
  display: flex;
  align-items: center;
  gap: 6px;
  width: 103px;
  height: 30px;
  padding-left: 10px;
  border-radius: 0 10px 10px 0;
  background: linear-gradient(#5eb55e 0, #3c9a3c 4px, #3a953a 16px, #2f7f2f 27px, #256b25);
  box-shadow: inset -3px 0 4px #1f5f1f, 1px 0 2px #17397f;
  font: italic 700 17.500px/28px "Open Sans", sans-serif;
  letter-spacing: -0.3px;
  color: #fff;
  text-shadow: 1px 1px 2px #1d3f1d;
`;
const Quick = styled.div`
  display: grid;
  grid-template-columns: repeat(4, 23.300px);
  grid-auto-rows: 30px;
  width: 111px;
  padding-left: 9px;
  align-items: center;
  justify-items: center;
`;
const Tasks = styled.div`
  display: grid;
  grid-template-columns: repeat(7, 123px);
  grid-template-rows: 24px 24px;
  gap: 6px 2px;
  padding-top: 3px;
  flex: 1;
`;
const Task = styled.div`
  display: flex;
  align-items: center;
  gap: 4px;
  height: 23px;
  padding: 0 4px 0 10px;
  border-radius: 3px;
  background: ${(p) => (p.$on ? 'linear-gradient(#153d94, #1e52b7 30%, #1b4aa8)' : 'linear-gradient(#5a9bf8, #3c81f3 20%, #3a7df0 80%, #2f6be0)')};
  box-shadow: inset 0 0 1px ${(p) => (p.$on ? '#0b2a70' : '#7db4ff')}, 1px 1px 1px #1a46a8;
  font: 10.8px/22px ${TAHOMA};
  letter-spacing: -0.05px;
  color: #fff;
`;
const Count = styled.b`
  color: #ffd38a;
  margin-right: -1px;
`;
const Lang = styled.div`
  display: flex;
  align-items: center;
  gap: 7px;
  width: 58px;
  padding: 0;
  font: 10.500px/16px ${TAHOMA};
  color: #fff;
`;
const LangCode = styled.span`
  padding: 0 2px;
  background: #3468c4;
`;
const Tray = styled.div`
  display: grid;
  grid-template-columns: 18px 18px 1fr;
  grid-template-rows: repeat(3, 19px);
  align-items: center;
  justify-items: center;
  width: 121px;
  padding: 2px 5px 0 9px;
  background: linear-gradient(#2cb5f5 0, #139ee9 4px, #0f8fe6 40px, #0f80d8 55px, #0b63b8);
  border-left: 1px solid #0a4fb0;
  font: 11.300px/19px ${TAHOMA};
  letter-spacing: -0.3px;
  color: #fff;
`;
const Chevron = styled.svg`
  position: absolute;
  left: 1151px;
  top: 22px;
`;

const Svg16 = ({ children, s = 16 }) => (
  <svg width={s} height={s} viewBox="0 0 16 16" fill="none">
    {children}
  </svg>
);
const T = {
  folder: (
    <Svg16>
      <path d="M1 3h5l1 2h8v9H1z" fill="#f5d77a" stroke="#a8842a" />
      <path d="M1.500 7h13" stroke="#fff4c0" />
    </Svg16>
  ),
  remote: (
    <Svg16>
      <circle cx="5" cy="5" r="4" fill="#dfe6ee" stroke="#9ab" />
      <rect x="6" y="5" width="9" height="7" fill="#1848b0" stroke="#ddd" />
      <path d="M5 14.500h9" stroke="#ccc" strokeWidth="2" />
    </Svg16>
  ),
  chrome: (
    <Svg16>
      <circle cx="8" cy="8" r="7" fill="#f4c51c" />
      <path d="M8 8L2 4.500A7 7 0 0 1 14.500 5z" fill="#db3a2b" />
      <path d="M8 8L2 4.300A7 7 0 0 0 7 15z" fill="#2f9e47" />
      <circle cx="8" cy="8" r="3.300" fill="#3f86e8" stroke="#fff" />
    </Svg16>
  ),
  ie: (
    <Svg16>
      <path d="M13.500 10.500A5.500 5.500 0 1 1 13.500 8H5" stroke="#5cc0f8" strokeWidth="2.600" />
      <path d="M1 14C0 10 9 1 15 1.500" stroke="#f5c83c" strokeWidth="1.400" />
    </Svg16>
  ),
  outlook: (
    <Svg16>
      <rect x="1" y="1" width="14" height="14" rx="1" fill="#f6b32c" stroke="#fff2c8" />
      <ellipse cx="8" cy="8" rx="3" ry="4" stroke="#fff" strokeWidth="2" />
    </Svg16>
  ),
  note: (
    <Svg16>
      <rect x="2" y="3" width="10" height="11" rx="2" fill="#fff" stroke="#3b8fd0" strokeWidth="1.500" />
      <path d="M7 10l6-8 2 1.500-6 7.500z" fill="#2a72c8" />
      <path d="M4.500 7h3M4.500 11h5" stroke="#2a72c8" />
    </Svg16>
  ),
  media: (
    <Svg16>
      <circle cx="8" cy="8" r="7" fill="#f08a2c" />
      <path d="M8 1a7 7 0 0 1 7 7H8z" fill="#58b040" />
      <path d="M8 15a7 7 0 0 1-7-7h7z" fill="#3c7fe0" />
      <circle cx="8" cy="8" r="4.500" fill="#f4f4f4" />
      <path d="M6.500 5.500l4 2.500-4 2.500z" fill="#222" />
    </Svg16>
  ),
  sql: (
    <Svg16>
      <rect x="1" y="1" width="6" height="9" rx="2" fill="#f4d272" stroke="#a88430" />
      <path d="M6 6l8 9M14 6l-7 9" stroke="#c8ccd0" strokeWidth="1.700" />
      <path d="M8 1h6v4" stroke="#5bd05b" strokeDasharray="2 1" />
    </Svg16>
  ),
  paint: (
    <Svg16>
      <path d="M4 8h8l-1 7H5z" fill="#c8d4e4" stroke="#678" />
      <path d="M5 8L3 1M8 8V1M11 8l2-6" stroke="#e8862c" strokeWidth="1.800" />
      <path d="M8 4V1" stroke="#c22" strokeWidth="2" />
    </Svg16>
  ),
  skype: (
    <Svg16>
      <rect x="1" y="1" width="14" height="14" rx="6" fill="#1fb4f0" />
      <path d="M10.500 5.500C9 3.800 5.500 4.200 5.700 6.200c.2 2 4.800 1.200 4.800 3.400 0 2-3.800 2.300-5.200.5" stroke="#fff" strokeWidth="1.700" />
    </Svg16>
  ),
  word: (
    <Svg16>
      <rect x="1" y="1" width="14" height="14" fill="#f2f6fc" stroke="#2a5ca8" />
      <path d="M3 4l2 8 3-7 3 7 2-8" stroke="#1f57a8" strokeWidth="1.800" />
    </Svg16>
  ),
  pad: (
    <Svg16>
      <path d="M4 2h9l-1 12H2z" fill="#8fd0ee" stroke="#3a7a9c" />
      <path d="M4.500 5h7M4 8h7M4 11h7" stroke="#fff" />
    </Svg16>
  ),
  reg: (
    <Svg16>
      <path d="M2 6l5-2 5 2v8l-5 1-5-1z" fill="#38b0a8" stroke="#0a2a30" />
      <path d="M2 10h10M5 5v9M9 5v9" stroke="#0a2a30" />
      <path d="M10 4l2-3 3 2-2 3z" fill="#46d0c8" stroke="#0a2a30" />
    </Svg16>
  ),
  goal: (
    <Svg16>
      <circle cx="8" cy="8" r="7.300" fill="#d8261c" />
      <rect x="4" y="3" width="8" height="8.500" rx="1.500" fill="#fff" />
      <path d="M5 5h6v3H5z" fill="#d8261c" />
      <path d="M8 4.500v4M4.500 12.500h2M9.500 12.500h2M4 10h8" stroke="#d8261c" />
    </Svg16>
  ),
  kies: (
    <Svg16>
      <rect width="16" height="16" rx="1" fill="#ee7a30" />
      <path d="M4 3v10M9 3.500L4.500 8 9 13M12 6v7M12 3v1.600" stroke="#fff" strokeWidth="1.900" />
    </Svg16>
  ),
  skno: (
    <Svg16>
      <rect x="1" y="1" width="14" height="14" rx="6" fill="#e02424" />
      <path d="M4.500 8h7" stroke="#fff" strokeWidth="2.400" />
    </Svg16>
  ),
  pdf: (
    <Svg16 s={15}>
      <rect x="1" y="2" width="12" height="13" fill="#b01818" stroke="#600" />
      <path d="M3 12c4-2 5-6 4-8-1 4 2 6 5 6-4-.5-7 0-9 2z" stroke="#fff" />
      <path d="M12 0l1 2 2 .5-1.500 1.500.5 2-2-1" fill="#fff" />
    </Svg16>
  ),
  net: (
    <Svg16 s={15}>
      <rect x="5.500" y="1" width="9" height="7" fill="#123c90" stroke="#c8d0dc" />
      <rect x="1" y="6" width="9" height="7" fill="#1a50b8" stroke="#c8d0dc" />
      <path d="M2 15h7" stroke="#ccc" />
    </Svg16>
  ),
  up: (
    <Svg16 s={15}>
      <circle cx="8" cy="8" r="7" fill="#f5a423" />
      <path d="M8 12V4.500M4.800 7.500L8 4.300l3.200 3.200" stroke="#fff" strokeWidth="2" />
    </Svg16>
  ),
  safe: (
    <Svg16 s={15}>
      <path d="M3 1h8l2 6-3 7H4L1 8z" fill="#7c8c7c" stroke="#dfe8df" />
      <circle cx="11" cy="10.500" r="4.500" fill="#fff" />
      <path d="M11 8v5M8.500 10.500h5" stroke="#d82020" strokeWidth="1.700" />
    </Svg16>
  ),
  keyb: (
    <Svg16>
      <rect x="1" y="6" width="14" height="8" rx="1" fill="#fff" stroke="#111" />
      <path d="M3 8.500h10M3 11.500h10" stroke="#111" strokeWidth="1.500" strokeDasharray="1.300 .8" />
      <path d="M8 6c0-3 4-1 4-4" stroke="#111" />
    </Svg16>
  ),
};

const WinGlyphs = ({ gap, color }) => (
  <WinButtons $gap={gap} $color={color}>
    <svg width="8" height="10" viewBox="0 0 8 10"><path d="M0 9h7" stroke="currentColor" strokeWidth="2" /></svg>
    <svg width="10" height="8" viewBox="0 0 10 8" fill="none"><path d="M1 3h6v4.500H1zM3 3V1h6v4.500H7" stroke="currentColor" strokeWidth="1.300" /></svg>
    <svg width="9" height="8" viewBox="0 0 9 8"><path d="M1 0l7 8M8 0L1 8" stroke="currentColor" strokeWidth="2" /></svg>
  </WinButtons>
);
const CloseX = () => (
  <svg width="9" height="9" viewBox="0 0 9 9"><path d="M1 1l7 7M8 1L1 8" stroke="#4c4c4c" strokeWidth="1.500" /></svg>
);

const TASKS = [
  ['ie', 0, 'Instalaciones ...'], ['folder', 3, 'Explorador...', 1], ['sql', 0, 'Microsoft SQL ...'], ['paint', 3, 'Paint', 1], ['remote', 2, 'Remote D...', 1], ['skype', 0, 'Skype™ - goal...'], ['word', 0, 'Manual de Us...'],
  ['word', 0, 'Organización ...'], ['pad', 3, 'Bloc de notas', 1], ['outlook', 0, 'Bandeja de en...'], ['reg', 0, 'Editor del Regi...'], ['goal', 0, 'GoalBus - [(21...', 0, 1], ['kies', 0, 'Kies'],
];

const TableRows = ({ cols, heads, sortAt, data, align = {}, selectFirst }) => (
  <Rows>
    <HeadRow $c={cols}>
      {heads.map((h, i) => (
        <HeadCell key={h}>
          {h}
          {i === sortAt && <Arrow $d="up" $s={5} $c="#5c5f66" />}
        </HeadCell>
      ))}
    </HeadRow>
    {data.map((r, ri) => (
      <DataRow key={ri} $c={cols} $sel={selectFirst && ri === 0}>
        {r.map((c, i) => (
          <DataCell key={i} $i={i} $sel={selectFirst && ri === 0} $a={align[i] && align[i](c)}>{c}</DataCell>
        ))}
      </DataRow>
    ))}
  </Rows>
);

const Expediciones = () => (
  <Floating>
    <FloatTitle>
      <FloatName>Expediciones</FloatName>
      <CloseX />
    </FloatTitle>
    <FloatBody>
      <Sunken $pl={14}>Tram:518 Exp:518 Reg:518 Expediciones sin bus asignado</Sunken>
      <Summary>
        <div>
          <SummaryTitle>Coste F.Obj</SummaryTitle>
          <Halves>
            <Half>
              {[['Dv. Trabajo:', '1493'], ['Dv. C. línea:', '0'], ['Dv. C. bus:', '0'], ['resto Servs:', '3638538545']].map(([a, b]) => (
                <HalfRow key={a} $l={70}><span>{a}</span><span>{b}</span></HalfRow>
              ))}
            </Half>
            <Half>
              {[['Desv. Frecs.:', '0'], ['Desv. T. Rec:', '102'], ['Dv. C. línea:', '0'], ['resto Buses:', '4095692498']].map(([a, b]) => (
                <HalfRow key={a} $l={78}><span>{a}</span><span>{b}</span></HalfRow>
              ))}
            </Half>
          </Halves>
        </div>
        <Facts>
          {[['595:29:30', 'Total horas'], ['548:23:30', 'De línea'], ['47:06:00', 'En vacío'], ['14896.53', 'Km en línea'], ['1409.06', 'Km Vacío'], ['25.79', 'Veloc. Com']].map(([a, b]) => (
            <React.Fragment key={b}><Cell>{a}</Cell><span>{b}</span></React.Fragment>
          ))}
        </Facts>
      </Summary>
      <Totals>
        <span>Total Servs:</span><span>1.575817e+010</span>
        <span>Total Buses:</span><span>4096382404</span>
        <span>Total:</span><span>1.985455e+010</span>
      </Totals>
      <ListBox $m="0 9px 0 5px" $dir="row">
        <TableRows cols={ECOLS} heads={['Evento', 'Tipo', 'Inicio', 'De', 'Fin', 'A']} sortAt={0} data={EDATA} />
        <VBar>
          <Arrow $d="up" $s={5} $c="#505050" />
          <VThumb />
        </VBar>
      </ListBox>
    </FloatBody>
  </Floating>
);

const numeric = () => 'right';

const Servicio = () => (
  <Side>
    <SideBody>
      <SideTitle>
        Servicio
        <WinButtons $gap={9} $color="#4a4a4a">
          <svg width="8" height="9" viewBox="0 0 8 9" fill="none"><path d="M2 1h4v4M2 1v4M0 5.500h8M4 5.500V9M5.500 1v4" stroke="currentColor" /></svg>
          <CloseX />
        </WinButtons>
      </SideTitle>
      <Sunken>Servicio 1 / 36 C 01</Sunken>
      <InfoCols>
        <Pairs $c="58px 44px">
          <Cell>Inicio:</Cell><Cell>5:01:30</Cell>
          <Cell>Fin:</Cell><Cell>10:51:00</Cell>
          <Cell>Trabajo:</Cell><Cell>5:49:30</Cell>
          <Cell $span="1 / 3" $mt={2} $pr={15}>1 Camb. línea</Cell>
        </Pairs>
        <Pairs $c="102px">
          <Cell $pr={11}>Desc ini:</Cell>
          <Cell $pr={11}>Desc fin:</Cell>
          <Cell $pr={11}>Descanso:</Cell>
          <Cell $mt={2}>0 Relevos</Cell>
        </Pairs>
        <Pairs $c="131px" $mt={3}>
          <Cell>Jornada:</Cell><Cell>En cabec.:</Cell><Cell>Desperdicio:</Cell><Cell>Desplazam.:</Cell>
        </Pairs>
        <Pairs $c="34px" $mt={3}>
          <Cell>5:49:30</Cell><Cell>0:30:30</Cell><Cell>0:00:00</Cell><Cell>0:00:00</Cell>
        </Pairs>
      </InfoCols>
      <Legend>
        <Rule $w={131} />
        <LegendText>Coste F.Obj</LegendText>
        <Rule $w={189} />
      </Legend>
      <CostGrid>
        <CostCol>
          <CostRow $l={82}><span>Trabajo:</span><span>21785</span></CostRow>
          <CostRow $l={82}><span>Camb. línea:</span><span>0</span></CostRow>
          <CostRow $l={82}><span>Relevos:</span><span>0</span></CostRow>
        </CostCol>
        <CostCol>
          <CostRow $l={88}><span>Plus:</span><span>1134300</span></CostRow>
          <CostRow $l={88}><span>Desv. Trab.:</span><span>0</span></CostRow>
          <CostRow $l={88}><span>Otros Desv:</span><span>0</span></CostRow>
        </CostCol>
        <TotalBox>
          <TotalLabel>Total:</TotalLabel>
          <span>1156085</span>
        </TotalBox>
      </CostGrid>
      <ListBox $m="0 3px 0 7px" $dir="column">
        <TableRows
          cols={SCOLS}
          heads={['Tipo', 'In...', 'De', 'Fin', 'A', 'Dur.', 'Bus', 'Linea']}
          sortAt={1}
          data={SDATA}
          selectFirst
          align={{ 1: numeric, 3: numeric, 6: (c) => (c === '-' ? 'left' : 'center') }}
        />
        <HBar>
          <Arrow $d="left" $c="#505050" />
          <HThumb><Ridges /></HThumb>
          <Spacer />
          <Arrow $d="right" $c="#505050" />
        </HBar>
      </ListBox>
    </SideBody>
    <Tabs>
      <Tab $w={68} $ls={-0.1}>Autobuses</Tab>
      <Tab $w={57}>Autobús</Tab>
      <Tab $w={53} $ls={-0.2}>Servicios</Tab>
      <ActiveTab>Servicio</ActiveTab>
    </Tabs>
  </Side>
);

export default function App() {
  return (
    <>
      <Global />
      <Screen>
        <TitleBar>
          {T.goal}
          <TitleText>GoalBus - [(2129) - 20120506_ Domingo]</TitleText>
          <WinGlyphs gap={15} color="#626262" />
        </TitleBar>
        <MenuBar>
          <Grip $c="#ddd" $mr={3} />
          <svg width="16" height="15" viewBox="0 0 16 15">
            <rect width="16" height="15" fill="#0a8080" />
            <rect x="1" y="1" width="12" height="13" rx="3" fill="#000" />
            <rect x="3" y="1.500" width="8" height="2" fill="#fff" />
            <rect x="1.500" y="4.500" width="11" height="5" fill="#fff" />
            <rect x="3" y="11" width="8" height="1.500" fill="#fff" />
            <path d="M14.500 1v13" stroke="#e01010" strokeWidth="1.500" />
          </svg>
          <Grip $c="transparent" $mr={5} />
          <MenuItem $w={54}>Archivo</MenuItem>
          <MenuItem $w={45}>Editar</MenuItem>
          <MenuItem $w={32}>Ver</MenuItem>
          <MenuItem $w={60}>Solución</MenuItem>
          <MenuItem $w={58}>Ventana</MenuItem>
          <MenuItem $w={60}>Ayuda</MenuItem>
          <Spacer />
          <WinGlyphs gap={5} color="#8f98a6" />
        </MenuBar>
        <ToolRow $mb={1}>
          <ToolStrip $w={1094}>
            <Grip $mr={2} />
            {tools('new open save edit del | expo saveexp imp | table | refresh | buses align | pencil pencil2 | redup mail stopgo stop play pause step saveclk lineinfo* businfo bus1 copinfo cop1* clip wins mixed lists stopw |')}
            <Dif>DIF.</Dif>
            <ToolSep />
            {tools('horn playinfo |')}
            <Combo>
              <ComboText>Coste F.Obj</ComboText>
              <ComboArrow><Arrow $d="down" $s={3} $c="#55585e" /></ComboArrow>
            </Combo>
            {tools('| print | printq preview | help')}
          </ToolStrip>
        </ToolRow>
        <ToolRow>
          <ToolStrip $w={602}>
            <Grip $mr={2} />
            {tools('waves busline* copline | door | wavelines | zin zout hin hout zbox | cross hfit | cascade | delsheet delsheets | first prev2 prev')}
            <PageBox>1/1</PageBox>
            {tools('next next2 last')}
          </ToolStrip>
        </ToolRow>
        <Workspace>
          <ChartFrame>
            <Chart />
            <VTrack>
              <Classic $w={17} $h={6} />
              <Classic $w={17} $h={17} $mt={1}><Arrow $d="up" /></Classic>
              <Classic $w={17} $h={110} $mt={1} />
              <Spacer />
              <Classic $w={17} $h={16}><Arrow $d="down" /></Classic>
            </VTrack>
            <HTrack>
              <Classic $w={17} $h={17}><Arrow $d="left" /></Classic>
              <Classic $w={573} $h={17} $ml={1} />
              <Spacer />
              <Classic $w={17} $h={17}><Arrow $d="right" /></Classic>
            </HTrack>
          </ChartFrame>
          <Servicio />
        </Workspace>
        <Status>
          <StatusPane $w={173} />
          <StatusPane $w={125} />
          <StatusPane $w={66} />
          <StatusPane $w={95}>Soluciones 1</StatusPane>
        </Status>
        <Expediciones />
        <DropShade />
        <EdgeGuide x={626} y={116} rot={0} />
        <EdgeGuide x={626} y={917} rot={180} />
        <EdgeGuide x={16} y={518} side />
        <EdgeGuide x={1233} y={518} side flip />
        <Guide $x={371} $y={477} width="90" height="90" viewBox="371 477 90 90">
          <DockDefs />
          <path d="M401 477h30v25l6 6h23v30h-23l-6 6v22h-30v-22l-6-6h-22v-30h22l6-6z" fill="#e2e2e2" stroke="#b4b4b4" strokeWidth="2" />
          <path d="M401 507.500h-28.500v29H401" fill="none" stroke="#316ac5" />
          <g transform="translate(404.500 482)"><Dock /></g>
          <g transform="translate(376 511)"><SideDock /></g>
          <g transform="translate(433 511)"><SideDock flip /></g>
          <g transform="translate(404.500 539)"><Dock rot={180} /></g>
        </Guide>
        <TaskBar>
          <Start>
            <svg width="18" height="18" viewBox="0 0 18 18">
              <path d="M3 3c2-1.500 4-1.500 6 0L7.500 9c-2-1.300-4-1.300-6 0z" fill="#e8532a" />
              <path d="M10 3.500c2 1.300 4 1.300 6.500 0L15 9.500c-2 1.300-4 1.300-6.200 0z" fill="#8ac53e" />
              <path d="M1.200 10c2-1.300 4-1.300 6 0l-1.500 6c-2-1.300-4-1.300-6 0z" fill="#3f86e0" />
              <path d="M8.500 10.500c2 1.300 4 1.300 6.200 0l-1.500 6c-2 1.300-4 1.300-6.200 0z" fill="#f8cc2c" />
            </svg>
            Inicio
          </Start>
          <Quick>
            {T.folder}{T.remote}{T.chrome}{T.ie}{T.outlook}{T.note}{T.media}
          </Quick>
          <Tasks>
            {TASKS.map(([ic, n, t, drop, on]) => (
              <Task key={t} $on={on}>
                {T[ic]}
                {n > 0 && <Count>{n}</Count>}
                {t}
                {drop ? <><Spacer /><Arrow $d="down" $s={3} $c="#fff" /></> : null}
              </Task>
            ))}
          </Tasks>
          <Lang>
            <LangCode>ES</LangCode>
            {T.keyb}
          </Lang>
          <Tray>
            {T.outlook}{T.skno}<span>13:38</span>
            {T.pdf}{T.net}<span>martes</span>
            {T.up}{T.safe}<span>25/09/2012</span>
          </Tray>
          <Chevron width="17" height="17" viewBox="0 0 17 17">
            <circle cx="8.500" cy="8.500" r="7.500" fill="#2f8ef0" stroke="#9fd0ff" />
            <path d="M10.500 4.500l-4 4 4 4" stroke="#fff" strokeWidth="2" fill="none" />
          </Chevron>
        </TaskBar>
      </Screen>
    </>
  );
}
